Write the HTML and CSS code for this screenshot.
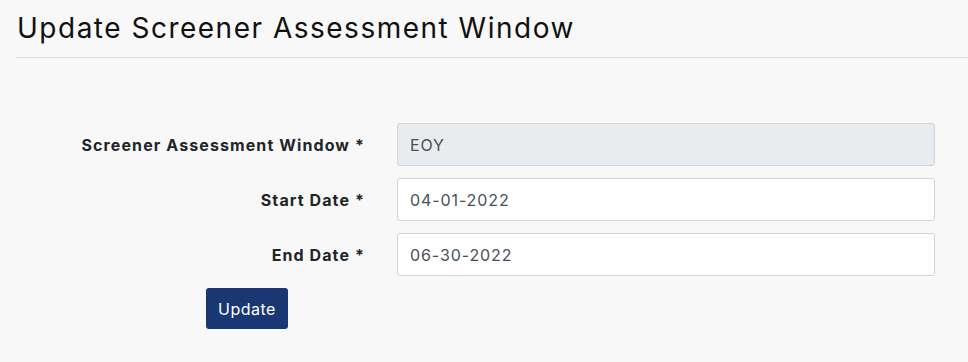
FILE: index.html
```html
<!DOCTYPE html>
<html lang="en">
<head>
<meta charset="utf-8">
<title>Update Screener Assessment Window</title>
<link rel="stylesheet" href="styles.css">
</head>
<body>
<div class="page">
  <h1 class="title">Update Screener Assessment Window</h1>
  <div class="form">
    <label class="label">Screener Assessment Window *</label>
    <div class="control disabled">EOY</div>
    <label class="label">Start Date *</label>
    <div class="control">04-01-2022</div>
    <label class="label">End Date *</label>
    <div class="control">06-30-2022</div>
    <div class="actions"><button class="btn">Update</button></div>
  </div>
</div>
</body>
</html>
```
FILE: styles.css
```css
html, body {
  margin: 0;
  padding: 0;
  background: #f8f8f8;
}
body {
  font-family: Inter, "Open Sans", sans-serif;
  color: #212529;
}
.page {
  padding-left: 16px;
}
.title {
  margin: 0;
  padding: 12px 0 13px 1px;
  font-size: 28px;
  font-weight: 400;
  line-height: 32px;
  letter-spacing: 1.5px;
  color: #111;
  border-bottom: 1px solid #dcdcdc;
}
.form {
  display: grid;
  grid-template-columns: 349px 1fr;
  column-gap: 32px;
  row-gap: 12px;
  padding: 65px 33px 0 0;
  align-items: center;
}
.label {
  text-align: right;
  font-size: 16px;
  font-weight: 700;
  letter-spacing: 1.1px;
  color: #212529;
}
.control {
  box-sizing: border-box;
  height: 43px;
  border: 1px solid #ced4da;
  border-radius: 3px;
  background: #fff;
  padding: 0 12px;
  display: flex;
  align-items: center;
  font-size: 16px;
  letter-spacing: 0.9px;
  color: #495057;
}
.control.disabled {
  background: #e9ecef;
}
.actions {
  grid-column: 1 / 3;
  padding-left: 190px;
}
.btn {
  height: 41px;
  width: 82px;
  border: none;
  border-radius: 3px;
  background: #183773;
  color: #fff;
  font-family: inherit;
  font-size: 16px;
  letter-spacing: 0.5px;
}
```
